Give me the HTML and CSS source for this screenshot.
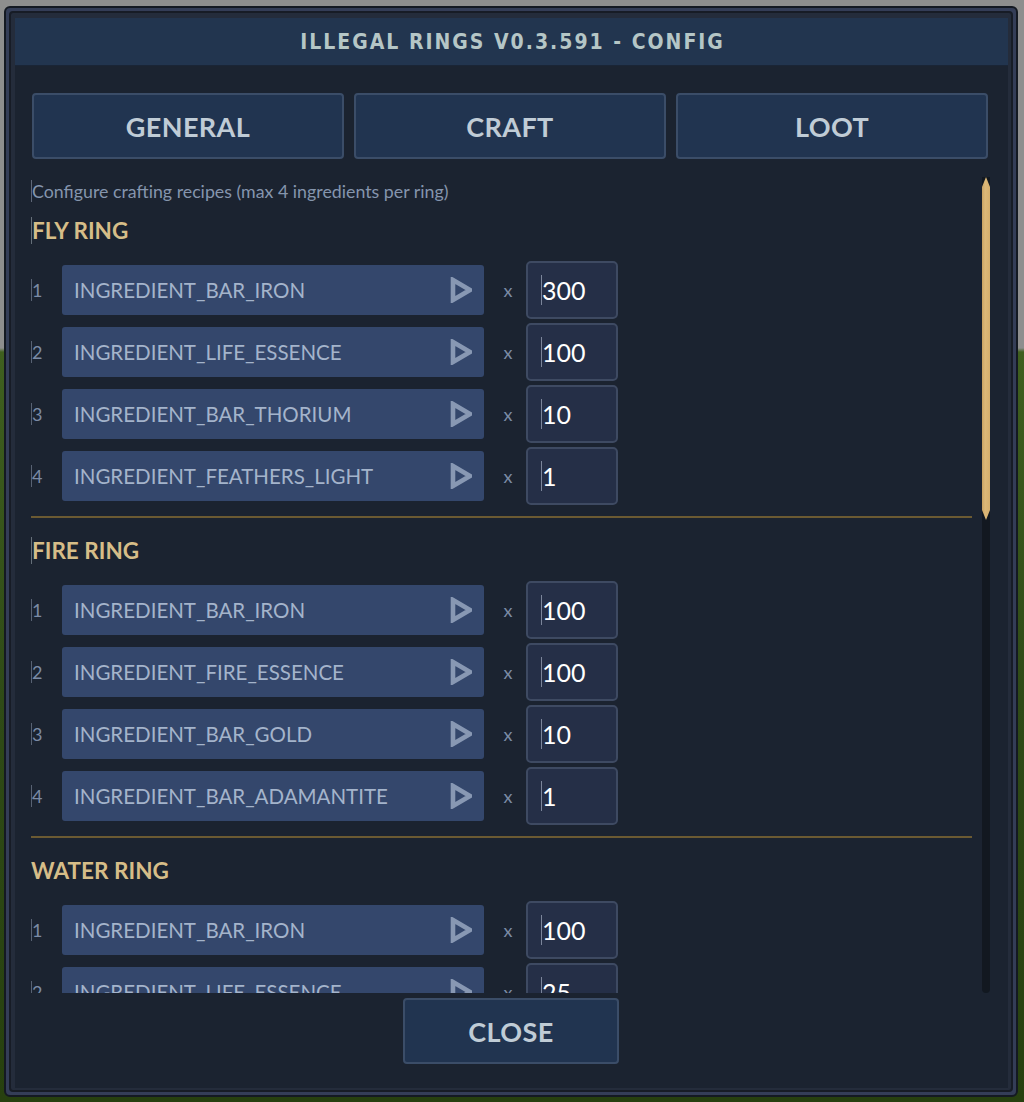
FILE: index.html
```html
<!DOCTYPE html>
<html>
<head>
<meta charset="utf-8">
<link rel="stylesheet" href="styles.css">
</head>
<body>
<div class="window">
  <div class="frame">
    <div class="titlebar">ILLEGAL RINGS V0.3.591 - CONFIG</div>
    <div class="panel">
      <div class="tabs">
        <div class="tab">GENERAL</div>
        <div class="tab">CRAFT</div>
        <div class="tab">LOOT</div>
      </div>
      <div class="scroll">
        <div class="content">
          <div class="subtitle"><span class="cur">Configure crafting recipes (max 4 ingredients per ring)</span></div>

          <div class="section">
            <div class="heading"><span class="cur">FLY RING</span></div>
            <div class="rows">
              <div class="row"><div class="idx"><span class="cur">1</span></div><div class="select"><span>INGREDIENT_BAR_IRON</span><svg class="arrow" viewBox="0 0 22 26"><polygon points="3,3 20,13 3,23"/></svg></div><div class="times">x</div><div class="num"><span class="cur">300</span></div></div>
              <div class="row"><div class="idx"><span class="cur">2</span></div><div class="select"><span>INGREDIENT_LIFE_ESSENCE</span><svg class="arrow" viewBox="0 0 22 26"><polygon points="3,3 20,13 3,23"/></svg></div><div class="times">x</div><div class="num"><span class="cur">100</span></div></div>
              <div class="row"><div class="idx"><span class="cur">3</span></div><div class="select"><span>INGREDIENT_BAR_THORIUM</span><svg class="arrow" viewBox="0 0 22 26"><polygon points="3,3 20,13 3,23"/></svg></div><div class="times">x</div><div class="num"><span class="cur">10</span></div></div>
              <div class="row"><div class="idx"><span class="cur">4</span></div><div class="select"><span>INGREDIENT_FEATHERS_LIGHT</span><svg class="arrow" viewBox="0 0 22 26"><polygon points="3,3 20,13 3,23"/></svg></div><div class="times">x</div><div class="num"><span class="cur">1</span></div></div>
            </div>
            <div class="divider"></div>
          </div>

          <div class="section">
            <div class="heading"><span class="cur">FIRE RING</span></div>
            <div class="rows">
              <div class="row"><div class="idx"><span class="cur">1</span></div><div class="select"><span>INGREDIENT_BAR_IRON</span><svg class="arrow" viewBox="0 0 22 26"><polygon points="3,3 20,13 3,23"/></svg></div><div class="times">x</div><div class="num"><span class="cur">100</span></div></div>
              <div class="row"><div class="idx"><span class="cur">2</span></div><div class="select"><span>INGREDIENT_FIRE_ESSENCE</span><svg class="arrow" viewBox="0 0 22 26"><polygon points="3,3 20,13 3,23"/></svg></div><div class="times">x</div><div class="num"><span class="cur">100</span></div></div>
              <div class="row"><div class="idx"><span class="cur">3</span></div><div class="select"><span>INGREDIENT_BAR_GOLD</span><svg class="arrow" viewBox="0 0 22 26"><polygon points="3,3 20,13 3,23"/></svg></div><div class="times">x</div><div class="num"><span class="cur">10</span></div></div>
              <div class="row"><div class="idx"><span class="cur">4</span></div><div class="select"><span>INGREDIENT_BAR_ADAMANTITE</span><svg class="arrow" viewBox="0 0 22 26"><polygon points="3,3 20,13 3,23"/></svg></div><div class="times">x</div><div class="num"><span class="cur">1</span></div></div>
            </div>
            <div class="divider"></div>
          </div>

          <div class="section">
            <div class="heading"><span>WATER RING</span></div>
            <div class="rows">
              <div class="row"><div class="idx"><span class="cur">1</span></div><div class="select"><span>INGREDIENT_BAR_IRON</span><svg class="arrow" viewBox="0 0 22 26"><polygon points="3,3 20,13 3,23"/></svg></div><div class="times">x</div><div class="num"><span class="cur">100</span></div></div>
              <div class="row"><div class="idx"><span class="cur">2</span></div><div class="select"><span>INGREDIENT_LIFE_ESSENCE</span><svg class="arrow" viewBox="0 0 22 26"><polygon points="3,3 20,13 3,23"/></svg></div><div class="times">x</div><div class="num"><span class="cur">25</span></div></div>
            </div>
          </div>
        </div>
        <div class="track"><div class="thumb"></div></div>
      </div>
      <div class="footer">
        <div class="close">CLOSE</div>
      </div>
    </div>
  </div>
</div>
</body>
</html>
```

FILE: styles.css
```css
* { box-sizing: border-box; }
html, body { margin: 0; padding: 0; }
body {
  width: 1024px;
  height: 1102px;
  overflow: hidden;
  background: linear-gradient(180deg, #8e8e8e 0, #8e8e8e 348px, #3f5f1f 352px, #2f4a17 700px, #27400f 1102px);
  font-family: Lato, "Open Sans", sans-serif;
  padding: 6px 6px 5px 4px;
}
.window {
  width: 1014px;
  height: 1091px;
  border: 2px solid #141922;
  border-radius: 6px;
  background: #343d57;
  padding: 3px;
}
.frame {
  height: 100%;
  border: 2px solid #171c26;
  border-radius: 4px;
  background: #242c3b;
  padding: 5px 3px 2px 4px;
  display: flex;
  flex-direction: column;
}
.titlebar {
  height: 48px;
  background: #22354f;
  border-bottom: 1px solid #1a2536;
  display: flex;
  align-items: center;
  justify-content: center;
  color: #b5c6c6;
  font-family: "DejaVu Sans Condensed", "DejaVu Sans", sans-serif;
  font-weight: bold;
  font-size: 21px;
  letter-spacing: 2px;
  padding-left: 2px;
}
.panel {
  flex: 1;
  background: #1b2330;
  display: flex;
  flex-direction: column;
}
.tabs {
  display: flex;
  gap: 10px;
  margin: 27px 20px 0 17px;
}
.tab, .close {
  height: 66px;
  background: #213450;
  border: 2px solid #3b4d68;
  border-radius: 4px;
  display: flex;
  align-items: center;
  justify-content: center;
  color: #c0ccd6;
  font-weight: bold;
  font-size: 27px;
  letter-spacing: 0.4px;
}
.tab { flex: 1; }
.scroll {
  margin: 18px 18px 0 16px;
  height: 816px;
  display: flex;
  gap: 10px;
}
.content {
  width: 941px;
  overflow: hidden;
  padding-top: 4px;
}
.cur {
  border-left: 1px solid rgba(150,160,180,0.55);
}
.subtitle {
  height: 20px;
  line-height: 20px;
  font-size: 17.8px;
  color: #8595ad;
  white-space: nowrap;
}
.heading {
  margin-top: 18px;
  height: 24px;
  line-height: 24px;
  font-size: 22.5px;
  font-weight: bold;
  color: #d6bd88;
}
.heading .cur { border-left-color: rgba(120,130,140,0.8); }
.rows {
  margin-top: 18px;
  display: flex;
  flex-direction: column;
  gap: 4px;
}
.row {
  height: 58px;
  display: flex;
  align-items: center;
}
.idx {
  width: 31px;
  font-size: 18px;
  color: #7b8ba5;
}
.idx .cur { border-left-color: rgba(130,140,160,0.6); }
.select {
  width: 422px;
  height: 50px;
  background: #34476c;
  border-radius: 3px;
  display: flex;
  align-items: center;
  justify-content: space-between;
  padding: 0 12px 0 12px;
  color: #a4b4cb;
  font-size: 20.5px;
}
.arrow {
  width: 22px;
  height: 26px;
}
.arrow polygon {
  fill: none;
  stroke: #8898b3;
  stroke-width: 4.6;
  stroke-linejoin: miter;
}
.times {
  width: 42px;
  padding-left: 6px;
  text-align: center;
  color: #7b8ba5;
  font-size: 18px;
}
.num {
  width: 92px;
  height: 58px;
  background: #252f47;
  border: 2px solid #3e4a62;
  border-radius: 5px;
  display: flex;
  align-items: center;
  padding-left: 13px;
  color: #ffffff;
  font-size: 25px;
}
.num .cur { border-left-color: rgba(160,170,190,0.7); }
.divider {
  margin: 11px 0 21px 0;
  height: 2px;
  background: #6b5a32;
}
.track {
  width: 8px;
  height: 816px;
  background: #121820;
  border-radius: 0 0 4px 4px;
}
.thumb {
  height: 343px;
  background: linear-gradient(90deg, #c8a263 0, #dcb878 40%, #d4ae6c 100%);
  clip-path: polygon(50% 0, 100% 10px, 100% calc(100% - 10px), 50% 100%, 0 calc(100% - 10px), 0 10px);
}
.footer {
  display: flex;
  justify-content: center;
  padding-top: 5px;
}
.close {
  width: 216px;
  margin-left: -1px;
}
```
